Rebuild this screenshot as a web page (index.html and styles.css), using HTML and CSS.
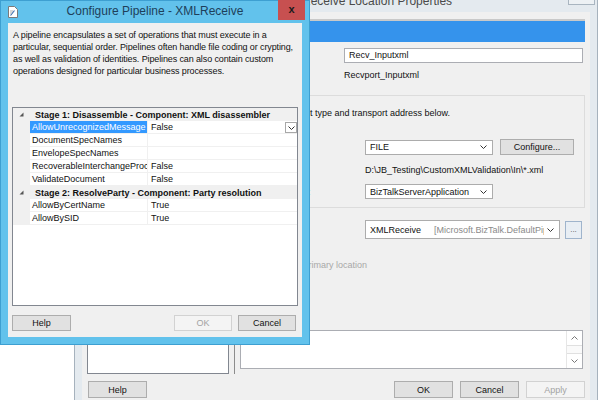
FILE: index.html
```html
<!DOCTYPE html>
<html lang="en">
<head>
<meta charset="UTF-8" />
<title>Configure Pipeline - XMLReceive</title>
<link rel="stylesheet" href="styles.css">
</head>
<body>
<div class="desktop">

  <!-- Receive Location Properties (inactive, behind) -->
  <div class="window bg-window">
    <div class="bg-titlebar">
      <span class="bg-title">Receive Location Properties</span>
      <span class="bg-close"></span>
    </div>
    <div class="bg-client">
      <div class="bg-main">
        <div class="nav-list"></div>
        <div class="splitter"></div>
        <div class="pane">
          <div class="pane-header">General</div>
          <div class="field-row name-row">
            <span class="field-label">Name:</span>
            <div class="textbox">Recv_Inputxml</div>
          </div>
          <div class="field-row port-row">
            <span class="field-label">Receive port:</span>
            <span>Recvport_Inputxml</span>
          </div>
          <div class="group">
            <div class="group-intro">Set the transport type and transport address below.</div>
            <div class="field-row type-row">
              <span class="group-label">Type:</span>
              <div class="combo combo-short"><span>FILE</span><svg class="chev" viewBox="0 0 7 4"><polyline points="0.5,0.5 3.5,3.5 6.5,0.5"/></svg></div>
              <button class="btn btn-configure">Configure...</button>
            </div>
            <div class="field-row uri-row">
              <span class="group-label">URI:</span>
              <span>D:\JB_Testing\CustomXMLValidation\In\*.xml</span>
            </div>
            <div class="field-row handler-row">
              <span class="group-label">Receive handler:</span>
              <div class="combo combo-short"><span>BizTalkServerApplication</span><svg class="chev" viewBox="0 0 7 4"><polyline points="0.5,0.5 3.5,3.5 6.5,0.5"/></svg></div>
            </div>
          </div>
          <div class="field-row pipeline-row">
            <span class="pipe-label">Receive pipeline:</span>
            <div class="combo combo-pipe">
              <span class="pipe-name">XMLReceive</span><span class="pipe-type">[Microsoft.BizTalk.DefaultPipelines.XMLReceive]</span>
              <svg class="chev" viewBox="0 0 7 4"><polyline points="0.5,0.5 3.5,3.5 6.5,0.5"/></svg>
            </div>
            <button class="btn btn-dots">...</button>
          </div>
          <div class="disabled-note">Use the primary location</div>
          <div class="notes">
            <div class="scrollbar">
              <div class="sb-btn"><svg class="chev up" viewBox="0 0 7 4"><polyline points="0.5,3.5 3.5,0.5 6.5,3.5"/></svg></div>
              <div class="sb-track"></div>
              <div class="sb-btn"><svg class="chev" viewBox="0 0 7 4"><polyline points="0.5,0.5 3.5,3.5 6.5,0.5"/></svg></div>
            </div>
          </div>
        </div>
      </div>
      <div class="bg-buttons">
        <button class="btn btn-help">Help</button>
        <button class="btn btn-ok">OK</button>
        <button class="btn">Cancel</button>
        <button class="btn" disabled>Apply</button>
      </div>
    </div>
  </div>

  <!-- Configure Pipeline dialog (active) -->
  <div class="window dialog">
    <div class="dlg-titlebar">
      <svg class="dlg-icon" viewBox="0 0 10 12">
        <path d="M0.5 0.5h6l3 3v8h-9z" fill="#fff" stroke="#7a7a7a"/>
        <path d="M2.5 9.5l4-5" stroke="#3b6fb0" stroke-width="1.2"/>
        <path d="M2 5h3M2 7h2" stroke="#b0b0b0"/>
      </svg>
      <span class="dlg-title">Configure Pipeline - XMLReceive</span>
      <span class="dlg-close">x</span>
    </div>
    <div class="dlg-client">
      <p class="desc">A pipeline encapsulates a set of operations that must execute in a particular, sequential order. Pipelines often handle file coding or crypting, as well as validation of identities. Pipelines can also contain custom operations designed for particular business processes.</p>

      <div class="propgrid">
        <div class="pcat">
          <svg class="expander" viewBox="0 0 5 5"><polygon points="4.5,0.5 4.5,4.5 0.5,4.5"/></svg>
          <span>Stage 1: Disassemble - Component: XML disassembler</span>
        </div>
        <div class="prow">
          <span class="gutter"></span>
          <span class="pname selected">AllowUnrecognizedMessage</span>
          <span class="pval">False<span class="drop"><svg class="chev" viewBox="0 0 7 4"><polyline points="0.5,0.5 3.5,3.5 6.5,0.5"/></svg></span></span>
        </div>
        <div class="prow">
          <span class="gutter"></span>
          <span class="pname">DocumentSpecNames</span>
          <span class="pval"></span>
        </div>
        <div class="prow">
          <span class="gutter"></span>
          <span class="pname">EnvelopeSpecNames</span>
          <span class="pval"></span>
        </div>
        <div class="prow">
          <span class="gutter"></span>
          <span class="pname">RecoverableInterchangeProcessing</span>
          <span class="pval">False</span>
        </div>
        <div class="prow">
          <span class="gutter"></span>
          <span class="pname">ValidateDocument</span>
          <span class="pval">False</span>
        </div>
        <div class="pcat">
          <svg class="expander" viewBox="0 0 5 5"><polygon points="4.5,0.5 4.5,4.5 0.5,4.5"/></svg>
          <span>Stage 2: ResolveParty - Component: Party resolution</span>
        </div>
        <div class="prow">
          <span class="gutter"></span>
          <span class="pname">AllowByCertName</span>
          <span class="pval">True</span>
        </div>
        <div class="prow">
          <span class="gutter"></span>
          <span class="pname">AllowBySID</span>
          <span class="pval">True</span>
        </div>
      </div>

      <div class="dlg-buttons">
        <button class="btn btn-help">Help</button>
        <button class="btn btn-ok" disabled>OK</button>
        <button class="btn">Cancel</button>
      </div>
    </div>
  </div>

</div>
</body>
</html>
```

FILE: styles.css
```css
* {
  box-sizing: border-box;
}
body {
  margin: 0;
  background: #fff;
  font-family: "Liberation Sans", Arial, sans-serif;
  font-size: 9px;
  color: #111;
  overflow: hidden;
}
.desktop {
  position: relative;
  width: 601px;
  height: 400px;
  overflow: hidden;
}
.window {
  position: absolute;
  display: flex;
  flex-direction: column;
}

/* buttons shared by both windows */
.btn {
  height: 17px;
  width: 59px;
  padding: 0;
  border: 1px solid #adadad;
  background: #e1e1e1;
  font-family: inherit;
  font-size: 9px;
  color: #111;
}
.btn:disabled {
  background: #f4f4f4;
  border-color: #d2d2d2;
  color: #a3a3a3;
}
.chev {
  width: 7px;
  height: 4px;
  fill: none;
  stroke: #333;
  stroke-width: 1;
}

/* ---- Receive Location Properties ---- */
.bg-window {
  left: 74px;
  top: -22px;
  width: 524px;
  height: 434px;
  background: #e4eaef;
  border: 1px solid #a6b2bd;
  padding: 0 7px 7px;
}
.bg-titlebar {
  display: flex;
  height: 33px;
  margin: 0 -7px;
  flex-shrink: 0;
}
.bg-title {
  padding: 15px 0 0 227px;
  font-size: 12px;
  line-height: 14px;
  color: #4a4a4a;
}
.bg-close {
  margin: 5px 2px 0 auto;
  width: 27px;
  height: 21px;
  border: 1px solid #a9b5c0;
  background: #edf1f4;
}
.bg-client {
  flex: 1;
  background: #f0f0f0;
  padding: 7px 5px 0;
  display: flex;
  flex-direction: column;
}
.bg-main {
  display: flex;
  height: 355px;
}
.nav-list {
  width: 142px;
  background: #fff;
  border: 1px solid #828790;
}
.splitter {
  width: 11px;
  display: flex;
  justify-content: center;
}
.splitter::before {
  content: "";
  width: 1px;
  background: #8c8c8c;
}
.pane {
  flex: 1;
  display: flex;
  flex-direction: column;
}
.pane-header {
  height: 23px;
  border-top: 2px solid #c9c9c9;
  background: #3593ec;
  color: #fff;
  font-weight: bold;
  padding: 5px 6px;
}
.field-row {
  display: flex;
  align-items: center;
  flex-shrink: 0;
}
.field-label {
  width: 104px;
  flex-shrink: 0;
  padding-left: 6px;
}
.textbox {
  flex: 1;
  height: 15px;
  margin-right: 2px;
  padding: 0 4px;
  border: 1px solid #abadb3;
  background: #fff;
  line-height: 13px;
}
.name-row {
  margin-top: 6px;
}
.port-row {
  margin-top: 5px;
  height: 14px;
}
.group {
  margin-top: 13px;
  border: 1px solid #dcdcdc;
  padding: 11px 0 8px 2px;
}
.group-intro {
  padding-left: 3px;
  line-height: 12px;
}
.group-label {
  width: 122px;
  flex-shrink: 0;
}
.type-row {
  margin-top: 20px;
  height: 16px;
}
.uri-row {
  margin-top: 9px;
  line-height: 12px;
}
.handler-row {
  margin-top: 8px;
  height: 15px;
}
.combo {
  display: flex;
  align-items: center;
  height: 15px;
  padding: 0 5px 0 4px;
  border: 1px solid #acacac;
  background: #fff;
  white-space: nowrap;
  overflow: hidden;
}
.combo .chev {
  flex-shrink: 0;
  margin-left: auto;
}
.combo-short {
  width: 128px;
}
.btn-configure {
  width: 74px;
  height: 16px;
  margin-left: 7px;
}
.pipeline-row {
  margin-top: 12px;
  height: 19px;
}
.pipe-label {
  width: 125px;
  flex-shrink: 0;
  padding-left: 1px;
}
.combo-pipe {
  width: 195px;
  height: 19px;
}
.pipe-name {
  width: 64px;
  flex-shrink: 0;
}
.pipe-type {
  color: #8a8a8a;
  overflow: hidden;
  flex: 1;
}
.combo-pipe .chev {
  margin-left: 3px;
}
.btn-dots {
  width: 17px;
  height: 18px;
  margin-left: 5px;
  border-color: #9fb4cc;
  background: #e8eef4;
  color: #555;
  font-size: 8px;
  line-height: 10px;
}
.disabled-note {
  margin-top: 20px;
  padding-left: 30px;
  line-height: 12px;
  color: #a8a8a8;
}
.notes {
  margin: auto 2px 5px 0;
  height: 39px;
  border: 1px solid #abadb3;
  background: #fff;
  display: flex;
  justify-content: flex-end;
}
.scrollbar {
  width: 16px;
  display: flex;
  flex-direction: column;
  border-left: 1px solid #e6e6e6;
}
.sb-btn {
  height: 14px;
  display: flex;
  align-items: center;
  justify-content: center;
}
.sb-btn .chev {
  stroke: #777;
}
.sb-track {
  flex: 1;
  border-top: 1px solid #e0e0e0;
  border-bottom: 1px solid #e0e0e0;
  background: #fafafa;
}
.bg-buttons {
  display: flex;
  gap: 7px;
  margin-top: 7px;
}
.bg-buttons .btn-help {
  margin-left: 1px;
}
.bg-buttons .btn-ok {
  margin-left: auto;
}

/* ---- Configure Pipeline dialog ---- */
.dialog {
  left: 0;
  top: 0;
  width: 310px;
  height: 345px;
  background: #62c2ec;
  border: 1px solid #3d9fd1;
  padding: 0 7px 7px;
}
.dlg-titlebar {
  display: flex;
  align-items: flex-start;
  height: 22px;
  margin: 0 -7px;
  flex-shrink: 0;
}
.dlg-icon {
  width: 10px;
  height: 12px;
  margin: 5px 14px 0 7px;
}
.dlg-title {
  flex: 1;
  text-align: center;
  padding-top: 3px;
  font-size: 12px;
  line-height: 14px;
  color: #1e3f5a;
}
.dlg-close {
  width: 27px;
  height: 20px;
  margin: -1px 4px 0 0;
  background: #c75050;
  color: #1a1a1a;
  font-size: 11px;
  font-weight: bold;
  line-height: 18px;
  text-align: center;
}
.dlg-client {
  flex: 1;
  background: #f0f0f0;
  display: flex;
  flex-direction: column;
}
.desc {
  margin: 0;
  padding: 6px 4px 0 5px;
  line-height: 12px;
  letter-spacing: -0.12px;
  height: 54px;
}
.propgrid {
  margin: 30px 4px 0;
  height: 199px;
  border: 1px solid #828790;
  background: #fff;
}
.pcat {
  display: flex;
  align-items: center;
  height: 13px;
  background: #f0f0f0;
  font-weight: bold;
}
.expander {
  width: 5px;
  height: 5px;
  margin: 0 11px 0 6px;
  fill: #555;
}
.prow {
  display: grid;
  grid-template-columns: 17px 118px 1fr;
  height: 13px;
  line-height: 12px;
}
.gutter {
  background: #f0f0f0;
}
.pname {
  padding-left: 2px;
  border-right: 1px solid #f0f0f0;
  border-bottom: 1px solid #f0f0f0;
  white-space: nowrap;
  overflow: hidden;
}
.pname.selected {
  background: #3399ff;
  color: #fff;
}
.pval {
  display: flex;
  justify-content: space-between;
  padding-left: 3px;
  border-bottom: 1px solid #f0f0f0;
}
.drop {
  width: 12px;
  height: 11px;
  margin-top: 1px;
  border: 1px solid #a8a8a8;
  background: #fff;
  display: flex;
  align-items: center;
  justify-content: center;
}
.dlg-buttons {
  display: flex;
  gap: 6px;
  margin: 9px 6px 0 4px;
}
.dlg-buttons .btn {
  width: 58px;
  height: 16px;
}
.dlg-buttons .btn-help {
  width: 59px;
}
.dlg-buttons .btn-ok {
  margin-left: auto;
}
```
